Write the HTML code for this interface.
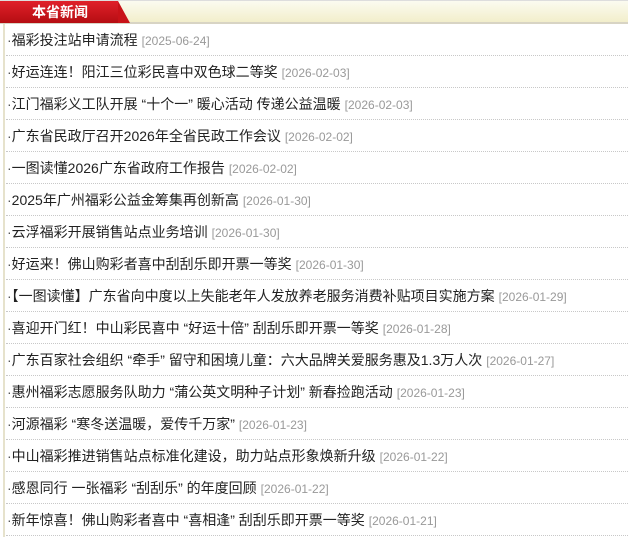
<!DOCTYPE html><html><head><meta charset="utf-8"><style>
body{margin:0;width:628px;height:537px;overflow:hidden;background:#fff;font-family:"Liberation Sans","Noto Sans CJK SC",sans-serif;position:relative}
.hd{position:absolute;left:0;top:0;width:628px;height:24px;background:linear-gradient(#fbfbf0,#f2eecb);border-top:1px solid #ddd;border-bottom:2px solid #d8d4c4;box-sizing:border-box}
.tab{position:absolute;left:0;top:0;width:118px;height:22px;background:linear-gradient(#e0202a,#b50d12);}
.tab:after{content:"";position:absolute;right:-12px;top:0;border-left:12px solid #c81218;border-top:22px solid transparent;}
.tab span{position:absolute;left:32px;top:3px;color:#fff;font-weight:bold;font-size:14px;line-height:16px}
.lb{position:absolute;left:3px;top:24px;width:2px;height:513px;background:#e6e2cc}
ul{position:absolute;left:6px;top:24px;width:622px;margin:0;padding:0;list-style:none}
li{height:31px;border-bottom:1px dotted #c8c8c8;font-size:14px;line-height:32px;color:#222;white-space:nowrap;padding-left:1px}
li:before{content:"·";color:#555;margin-right:0}
li i{font-style:normal;color:#999;font-size:12px;margin-left:4px}
</style></head><body>
<div class="hd"><div class="tab"><span>本省新闻</span></div></div>
<div class="lb"></div>
<ul>
<li>福彩投注站申请流程<i>[2025-06-24]</i></li>
<li>好运连连！阳江三位彩民喜中双色球二等奖<i>[2026-02-03]</i></li>
<li>江门福彩义工队开展 “十个一” 暖心活动 传递公益温暖<i>[2026-02-03]</i></li>
<li>广东省民政厅召开2026年全省民政工作会议<i>[2026-02-02]</i></li>
<li>一图读懂2026广东省政府工作报告<i>[2026-02-02]</i></li>
<li>2025年广州福彩公益金筹集再创新高<i>[2026-01-30]</i></li>
<li>云浮福彩开展销售站点业务培训<i>[2026-01-30]</i></li>
<li>好运来！佛山购彩者喜中刮刮乐即开票一等奖<i>[2026-01-30]</i></li>
<li>【一图读懂】广东省向中度以上失能老年人发放养老服务消费补贴项目实施方案<i>[2026-01-29]</i></li>
<li>喜迎开门红！中山彩民喜中 “好运十倍” 刮刮乐即开票一等奖<i>[2026-01-28]</i></li>
<li>广东百家社会组织 “牵手” 留守和困境儿童：六大品牌关爱服务惠及1.3万人次<i>[2026-01-27]</i></li>
<li>惠州福彩志愿服务队助力 “蒲公英文明种子计划” 新春捡跑活动<i>[2026-01-23]</i></li>
<li>河源福彩 “寒冬送温暖，爱传千万家”<i>[2026-01-23]</i></li>
<li>中山福彩推进销售站点标准化建设，助力站点形象焕新升级<i>[2026-01-22]</i></li>
<li>感恩同行 一张福彩 “刮刮乐” 的年度回顾<i>[2026-01-22]</i></li>
<li>新年惊喜！佛山购彩者喜中 “喜相逢” 刮刮乐即开票一等奖<i>[2026-01-21]</i></li>
</ul>
</body></html>
